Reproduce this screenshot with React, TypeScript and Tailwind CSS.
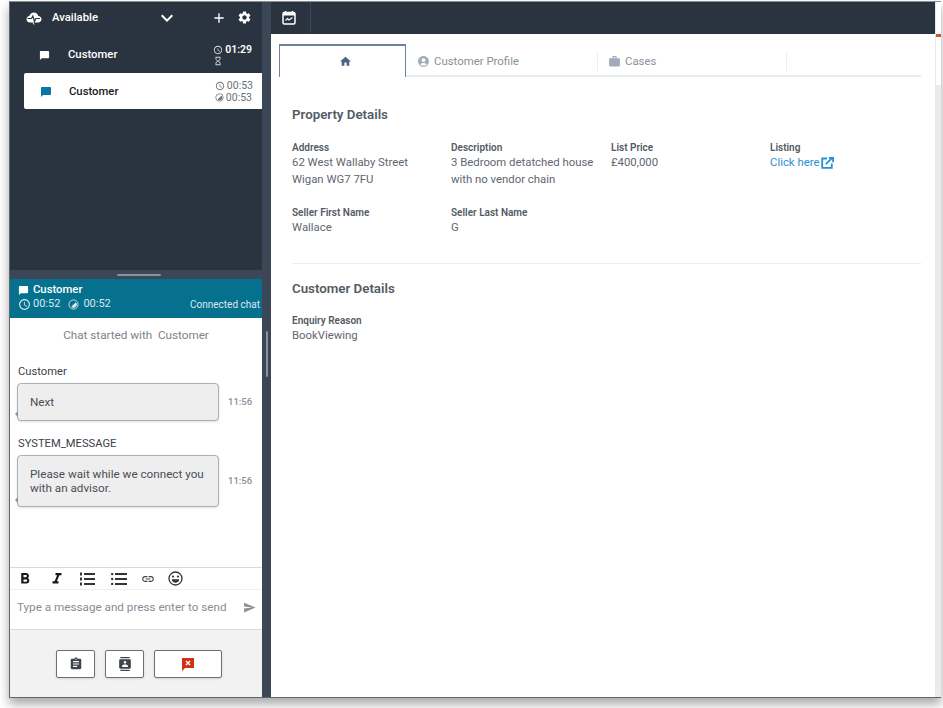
import {
  MdAdd,
  MdAccessTime,
  MdAccountCircle,
  MdAssignment,
  MdChatBubble,
  MdContacts,
  MdFormatBold,
  MdFormatItalic,
  MdHome,
  MdHourglassEmpty,
  MdKeyboardArrowDown,
  MdLink,
  MdSend,
  MdSettings,
  MdWork,
} from "react-icons/md";

const font = { fontFamily: 'Roboto, "Noto Sans", sans-serif' };

const CloudPulse = () => (
  <svg width="16" height="14" viewBox="0 0 16 14" fill="none">
    <path d="M4 11.5C1.8 11.5.5 10 .5 8.2S1.8 5 3.4 5C4 2.8 5.800 1.500 7.800 1.500c2.300 0 4 1.500 4.400 3.500 1.900.1 3.300 1.400 3.300 3.200s-1.400 3.300-3.500 3.300z" fill="#fff" />
    <path d="M1.500 7.500h4l1.300-2.500 1.700 5.500 1.300-3h4" stroke="#2a3440" strokeWidth="1.200" />
    <path d="M7 11.500l.8 2" stroke="#fff" strokeWidth="1" />
  </svg>
);

const CalendarPulse = () => (
  <svg width="14" height="15" viewBox="0 0 14 15" fill="none">
    <rect x="1" y="2.500" width="12" height="11.500" rx="1.500" stroke="#fff" strokeWidth="1.500" />
    <path d="M1 3h12v2.500H1z" fill="#fff" />
    <path d="M3.500 1v2M10.500 1v2" stroke="#fff" strokeWidth="1.500" />
    <path d="M3.500 10.500l2-2 1.500 1.500 3.500-2.500" stroke="#fff" strokeWidth="1.100" />
  </svg>
);

const Timer = ({ className }: { className: string }) => (
  <svg viewBox="0 0 12 12" fill="none" className={className}>
    <circle cx="6" cy="6" r="5" stroke="currentColor" strokeWidth="1" />
    <path d="M6 6l2.500-2.500A3.500 3.500 0 1 1 3.500 8.500z" fill="currentColor" />
  </svg>
);

const EndChat = () => (
  <svg width="14" height="14" viewBox="0 0 14 14">
    <path d="M1 1h12v10H4l-3 3z" fill="#d13212" />
    <path d="M5 4l4 4M9 4l-4 4" stroke="#fff" strokeWidth="1.400" />
  </svg>
);

const ListNumbered = () => (
  <svg width="16" height="14" viewBox="0 0 16 14" fill="#333" className="ml-[13px]">
    <rect x="5" y="1" width="11" height="2" />
    <rect x="5" y="6" width="11" height="2" />
    <rect x="5" y="11" width="11" height="2" />
    <rect x="1" y="0.500" width="2" height="3" />
    <rect x="1" y="5.500" width="2" height="3" />
    <rect x="1" y="10.500" width="2" height="3" />
  </svg>
);

const ListBulleted = () => (
  <svg width="16" height="12" viewBox="0 0 16 12" fill="#333" className="ml-[16px]">
    <rect x="4" y="0" width="12" height="2" />
    <rect x="4" y="5" width="12" height="2" />
    <rect x="4" y="10" width="12" height="2" />
    <circle cx="1.200" cy="1" r="1.200" />
    <circle cx="1.200" cy="6" r="1.200" />
    <circle cx="1.200" cy="11" r="1.200" />
  </svg>
);

const Grin = () => (
  <svg width="15" height="15" viewBox="0 0 15 15" fill="none" className="ml-[13px]">
    <circle cx="7.500" cy="7.500" r="6.500" stroke="#333" strokeWidth="1.300" />
    <circle cx="5" cy="5.500" r="1.100" fill="#333" />
    <circle cx="10" cy="5.500" r="1.100" fill="#333" />
    <path d="M3.800 8.200h7.400c0 2.200-1.600 3.600-3.700 3.600S3.800 10.400 3.800 8.200z" fill="#333" />
  </svg>
);

const ExternalLink = () => (
  <svg width="13" height="12" viewBox="0 0 13 12" fill="none" className="ml-[2px]">
    <path d="M6 1.500H1.200v9.300h9.600V6.500" stroke="#2b8fd6" strokeWidth="1.800" />
    <path d="M4.800 7.200L11 1.200M7.800.9h4.300v4.300" stroke="#2b8fd6" strokeWidth="1.800" />
  </svg>
);

const Field = ({ label, lines }: { label: string; lines: string[] }) => (
  <div>
    <div className="text-[10px] leading-[13px] font-semibold text-[#545b64]">{label}</div>
    {lines.map((l) => (
      <div key={l} className="text-[11.350px] leading-[17px] text-[#5f6670]">{l}</div>
    ))}
  </div>
);

const Bubble = ({ name, lines, h }: { name: string; lines: string[]; h: string }) => (
  <div className="pl-[7px]">
    <div className="text-[11.200px] leading-[16px] text-[#3c4148] pl-px">{name}</div>
    <div className="flex items-center mt-[3px]">
      <div className={`relative w-[202px] ${h} flex flex-col justify-center pl-[12px] rounded-[4px] border border-[#aab0b5] bg-[#eeeeee] text-[11.700px] leading-[14px] text-[#4a4f56] shadow-sm`}>
        <span className="absolute left-[-3px] bottom-[3px] w-0 h-0 border-y-[3px] border-y-transparent border-r-[3px] border-r-[#8a9097]" />
        {lines.map((l) => (
          <div key={l}>{l}</div>
        ))}
      </div>
      <span className="ml-[9px] text-[9.500px] text-[#8a9097] font-medium">11:56</span>
    </div>
  </div>
);

const ActionBtn = ({ w, children }: { w: string; children: React.ReactNode }) => (
  <button className={`${w} h-[28px] flex items-center justify-center bg-white rounded-[2px] border border-[#6b7075] shadow-sm`}>
    {children}
  </button>
);

export default function App() {
  return (
    <div style={font} className="w-[943px] h-[708px] overflow-hidden bg-white pl-[9px] pt-px">
      <div className="flex h-[697px] w-[932px] border-t border-b border-l border-t-[#8a8f95] border-x-[#5f666e] border-b-[#5f666e] shadow-[0_6px_10px_rgba(0,0,0,0.35)]">
        {/* left column */}
        <div className="w-[252px] shrink-0 flex flex-col">
          <div className="h-[268px] bg-[#2a3440] text-white">
            <div className="h-[31px] flex items-center pl-[16px]">
              <CloudPulse />
              <span className="ml-[10px] mt-[2px] text-[11.300px] font-medium">Available</span>
              <MdKeyboardArrowDown className="ml-[57px] text-[24px]" />
              <MdAdd className="ml-[32px] text-[16px]" />
              <MdSettings className="ml-[10px] text-[15px]" />
            </div>
            <div className="h-[36px] mt-[4px] flex items-center pl-[29px] pr-[10px]">
              <MdChatBubble className="text-[11px]" />
              <span className="ml-[18px] text-[11.300px] font-medium">Customer</span>
              <div className="ml-auto text-[#d5dbdb]">
                <div className="flex items-center gap-[2px] h-[11px]">
                  <MdAccessTime className="text-[10px]" />
                  <span className="text-[10.500px] font-semibold text-white">01:29</span>
                </div>
                <MdHourglassEmpty className="text-[10px]" />
              </div>
            </div>
            <div className="h-[36px] ml-[14px] pt-px flex items-center bg-white rounded-l-[2px] pl-[16px] pr-[9px] text-[#16191f]">
              <MdChatBubble className="text-[12px] text-[#0a76a8]" />
              <span className="ml-[17px] mt-px text-[11.300px] font-medium">Customer</span>
              <div className="ml-auto text-[10.500px] leading-[12px] text-[#687078]">
                <div className="flex items-center gap-[2px]"><MdAccessTime className="text-[10px]" />00:53</div>
                <div className="flex items-center gap-[2px]"><Timer className="w-[9px] h-[9px]" />00:53</div>
              </div>
            </div>
          </div>
          <div className="h-[9px] bg-[#3b4757] flex items-center justify-center">
            <div className="w-[44px] h-[2px] ml-[5px] rounded-full bg-[#8a929b]" />
          </div>
          <div className="h-[39px] bg-[#06708f] text-white pl-[8px] pr-[2px] pt-[4px]">
            <div className="flex items-center h-[15px] text-[11.300px] font-medium">
              <MdChatBubble className="text-[11px] mr-[4px]" />Customer
            </div>
            <div className="flex items-center h-[13px] text-[11px] text-[#dbe9ee]">
              <MdAccessTime className="text-[13px] mr-[2px]" />00:52
              <Timer className="w-[11px] h-[11px] ml-[8px] mr-[4px]" />00:52
              <span className="ml-auto text-[10px]">Connected chat</span>
            </div>
          </div>
          <div className="flex-1 bg-white flex flex-col min-h-0">
            <div className="h-[249px]">
              <div className="text-center text-[11.700px] text-[#7d838a] pt-[9px] leading-[16px]">Chat started with&nbsp; Customer</div>
              <div className="mt-[21px]"><Bubble name="Customer" lines={["Next"]} h="h-[38px]" /></div>
              <div className="mt-[15px]"><Bubble name="SYSTEM_MESSAGE" lines={["Please wait while we connect you", "with an advisor."]} h="h-[52px]" /></div>
            </div>
            <div className="h-[23px] border-t border-[#d9d9d9] border-b-[#eeeeee] border-b flex items-center pl-[6px] text-[#16191f]">
              <MdFormatBold className="text-[18px]" />
              <MdFormatItalic className="text-[18px] ml-[14px]" />
              <ListNumbered />
              <ListBulleted />
              <MdLink className="text-[14px] ml-[14px] text-[#444]" />
              <Grin />
            </div>
            <div className="h-[40px] border-b border-[#dddddd] flex items-center pl-[7px] pr-[6px] pb-[4px]">
              <span className="text-[11.700px] text-[#878d94]">Type a message and press enter to send</span>
              <MdSend className="ml-auto text-[13px] text-[#8a9097]" />
            </div>
            <div className="flex-1 bg-[#f2f2f2] flex items-start pl-[46px] gap-[10px] pt-[20px]">
              <ActionBtn w="w-[39px]"><MdAssignment className="text-[14px] text-[#3f444a]" /></ActionBtn>
              <ActionBtn w="w-[39px]"><MdContacts className="text-[14px] text-[#3f444a]" /></ActionBtn>
              <ActionBtn w="w-[68px]"><EndChat /></ActionBtn>
            </div>
          </div>
        </div>
        <div className="w-[9px] shrink-0 bg-[#3b4757] flex items-center justify-center">
          <div className="w-[2px] h-[46px] mt-[8px] rounded-full bg-[#8a929b]" />
        </div>
        {/* right column */}
        <div className="w-[664px] shrink-0 flex flex-col">
          <div className="h-[32px] shrink-0 bg-[#2a3440] flex">
            <div className="w-[40px] h-[31px] border-r border-[#3b4757] flex items-center justify-center pr-[4px]">
              <CalendarPulse />
            </div>
          </div>
          <div className="flex-1 bg-white pl-[8px] pr-[14px] pt-[10px]">
            <div className="flex h-[33px] border-b-2 border-[#eaeded]">
              <div className="w-[127px] h-[33px] bg-white border border-b-0 border-t-2 border-[#6d839b] flex items-center justify-center pl-[6px]">
                <MdHome className="text-[13px] text-[#4b6480]" />
              </div>
              <div className="w-[191px] flex items-center pl-[11px] pt-[4px] text-[11.400px] text-[#8a9097]">
                <MdAccountCircle className="text-[13px] text-[#a0acba] mr-[4px]" />Customer Profile
              </div>
              <div className="w-[190px] h-[19px] mt-[8px] border-x border-[#eeeeee] flex items-center pl-[10px] text-[11.400px] text-[#8a9097]">
                <MdWork className="text-[13px] text-[#a0acba] mr-[4px]" />Cases
              </div>
            </div>
            <div className="pl-[13px]">
              <h2 className="mt-[29px] text-[13.300px] leading-[18px] font-semibold text-[#545b64]">Property Details</h2>
              <div className="mt-[17px] grid grid-cols-[159px_160px_159px_1fr] gap-y-[18px]">
                <Field label="Address" lines={["62 West Wallaby Street", "Wigan WG7 7FU"]} />
                <Field label="Description" lines={["3 Bedroom detatched house", "with no vendor chain"]} />
                <Field label="List Price" lines={["£400,000"]} />
                <div>
                  <div className="text-[10px] leading-[13px] font-semibold text-[#545b64]">Listing</div>
                  <div className="flex items-center text-[11.350px] leading-[17px] text-[#2b8fd6]">
                    Click here <ExternalLink />
                  </div>
                </div>
                <Field label="Seller First Name" lines={["Wallace"]} />
                <Field label="Seller Last Name" lines={["G"]} />
              </div>
              <div className="mt-[27px] border-t border-[#eaeded]" />
              <h2 className="mt-[16px] text-[13.300px] leading-[18px] font-semibold text-[#545b64]">Customer Details</h2>
              <div className="mt-[16px]"><Field label="Enquiry Reason" lines={["BookViewing"]} /></div>
            </div>
          </div>
        </div>
        {/* scrollbar strip */}
        <div className="w-[6px] shrink-0 flex flex-col border-l border-[#e4e6e8]">
          <div className="h-[32px] bg-white" />
          <div className="h-[3px] bg-[#d9531e]" />
          <div className="h-[48px] bg-white" />
          <div className="flex-1 bg-[#eaedf0]" />
        </div>
      </div>
    </div>
  );
}
